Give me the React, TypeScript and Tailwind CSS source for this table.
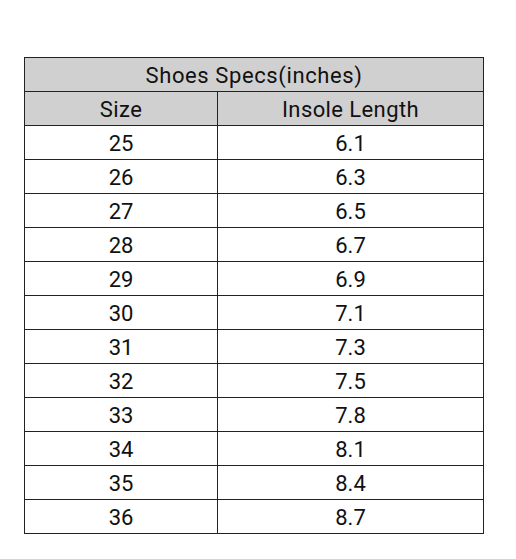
const rows: [number, string][] = [
  [25, '6.1'],
  [26, '6.3'],
  [27, '6.5'],
  [28, '6.7'],
  [29, '6.9'],
  [30, '7.1'],
  [31, '7.3'],
  [32, '7.5'],
  [33, '7.8'],
  [34, '8.1'],
  [35, '8.4'],
  [36, '8.7'],
];

export default function App() {
  return (
    <div className="w-[516px] h-[559px] bg-white pt-[57px] pl-[24px] font-['Roboto',sans-serif] text-[#111]">
      <table className="border-collapse w-[460px] text-[22px] leading-none">
        <thead>
          <tr className="bg-[#d0d0d0]">
            <th colSpan={2} className="h-[34px] pt-[3px] border border-[#222] font-normal text-center tracking-[0.6px]">
              Shoes Specs(inches)
            </th>
          </tr>
          <tr className="bg-[#d0d0d0]">
            <th className="h-[34px] pt-[3px] w-[193px] border border-[#222] font-normal text-center tracking-[0.4px]">Size</th>
            <th className="h-[34px] pt-[3px] border border-[#222] font-normal text-center tracking-[0.4px]">Insole Length</th>
          </tr>
        </thead>
        <tbody>
          {rows.map(([size, len]) => (
            <tr key={size}>
              <td className="h-[34px] pt-[3px] border border-[#222] text-center">{size}</td>
              <td className="h-[34px] pt-[3px] border border-[#222] text-center">{len}</td>
            </tr>
          ))}
        </tbody>
      </table>
    </div>
  );
}
